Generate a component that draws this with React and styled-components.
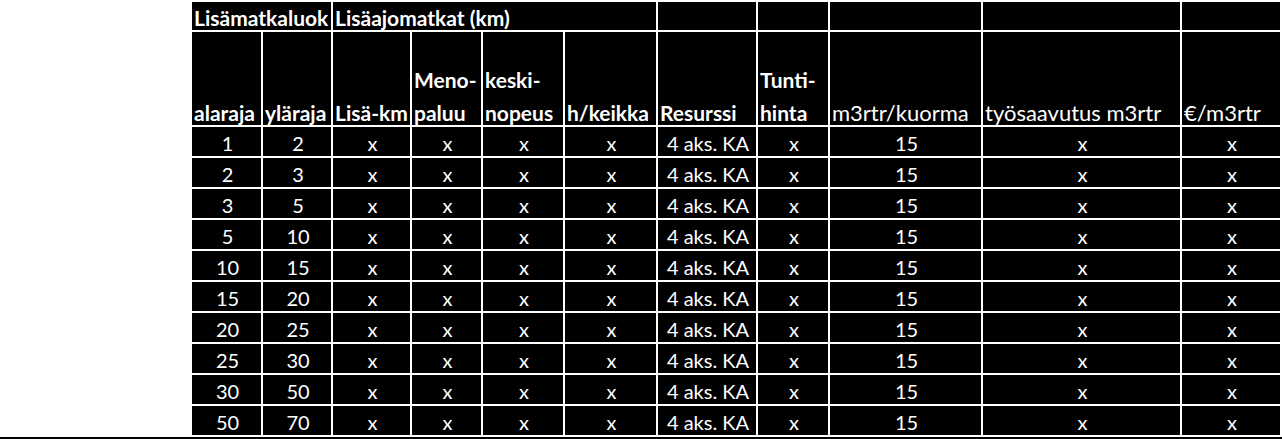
import React from "react";
import styled, { createGlobalStyle } from "styled-components";

const Global = createGlobalStyle`
  html, body { margin: 0; padding: 0; background: #fff; }
  body { font-family: Lato, "Liberation Sans", sans-serif; }
`;

const Page = styled.div`
  width: 1282px;
  height: 439px;
  padding-top: 2px;
  box-sizing: border-box;
  display: flex;
  flex-direction: column;
`;

const Sheet = styled.div`
  margin-left: 192px;
  width: 1088px;
  display: grid;
  grid-template-columns: 69px 68px 77px 69px 80px 91px 98px 70px 151px 197px 98px;
  grid-template-rows: 28px 93px repeat(10, 29px);
  gap: 2px;
  background: #fff;
`;

const Cell = styled.div`
  background: #000;
  color: #fff;
  font-size: ${(p) => p.$size || 20}px;
  font-weight: ${(p) => (p.$bold ? 700 : 400)};
  display: flex;
  flex-direction: column;
  justify-content: flex-end;
  align-items: ${(p) => (p.$center ? "center" : "flex-start")};
  padding: 0 0 0 2px;
  overflow: hidden;
  white-space: nowrap;
  grid-column: ${(p) => (p.$span ? `span ${p.$span}` : "auto")};
`;

const Line = styled.span`
  display: block;
  line-height: 24px;
  & + & { margin-top: 9px; }
`;

const DataLine = styled.span`
  display: block;
  line-height: 26px;
`;

const BottomRule = styled.div`
  margin-top: 2px;
  height: 2px;
  background: #000;
  width: 1282px;
`;

const headers = [
  { lines: ["alaraja"], bold: true },
  { lines: ["yläraja"], bold: true },
  { lines: ["Lisä-km"], bold: true },
  { lines: ["Meno-", "paluu"], bold: true },
  { lines: ["keski-", "nopeus"], bold: true },
  { lines: ["h/keikka"], bold: true },
  { lines: ["Resurssi"], bold: true },
  { lines: ["Tunti-", "hinta"], bold: true },
  { lines: ["m3rtr/kuorma"], bold: false },
  { lines: ["työsaavutus m3rtr"], bold: false },
  { lines: ["€/m3rtr"], bold: false },
];

const ranges = [
  [1, 2], [2, 3], [3, 5], [5, 10], [10, 15],
  [15, 20], [20, 25], [25, 30], [30, 50], [50, 70],
];

export default function App() {
  return (
    <>
      <Global />
      <Page>
        <Sheet>
          <Cell $bold $size={21} $span={2}><Line>Lisämatkaluok</Line></Cell>
          <Cell $bold $size={21} $span={4}><Line>Lisäajomatkat (km)</Line></Cell>
          {Array.from({ length: 5 }).map((_, i) => <Cell key={"e" + i} />)}
          {headers.map((h, i) => (
            <Cell key={"h" + i} $bold={h.bold} $size={h.bold ? 21 : 22}>
              {h.lines.map((l) => <Line key={l}>{l}</Line>)}
            </Cell>
          ))}
          {ranges.map(([a, b], r) =>
            [a, b, "x", "x", "x", "x", "4 aks. KA", "x", "15", "x", "x"].map((v, c) => (
              <Cell key={r + "-" + c} $center>
                <DataLine>{v}</DataLine>
              </Cell>
            ))
          )}
        </Sheet>
        <BottomRule />
      </Page>
    </>
  );
}
